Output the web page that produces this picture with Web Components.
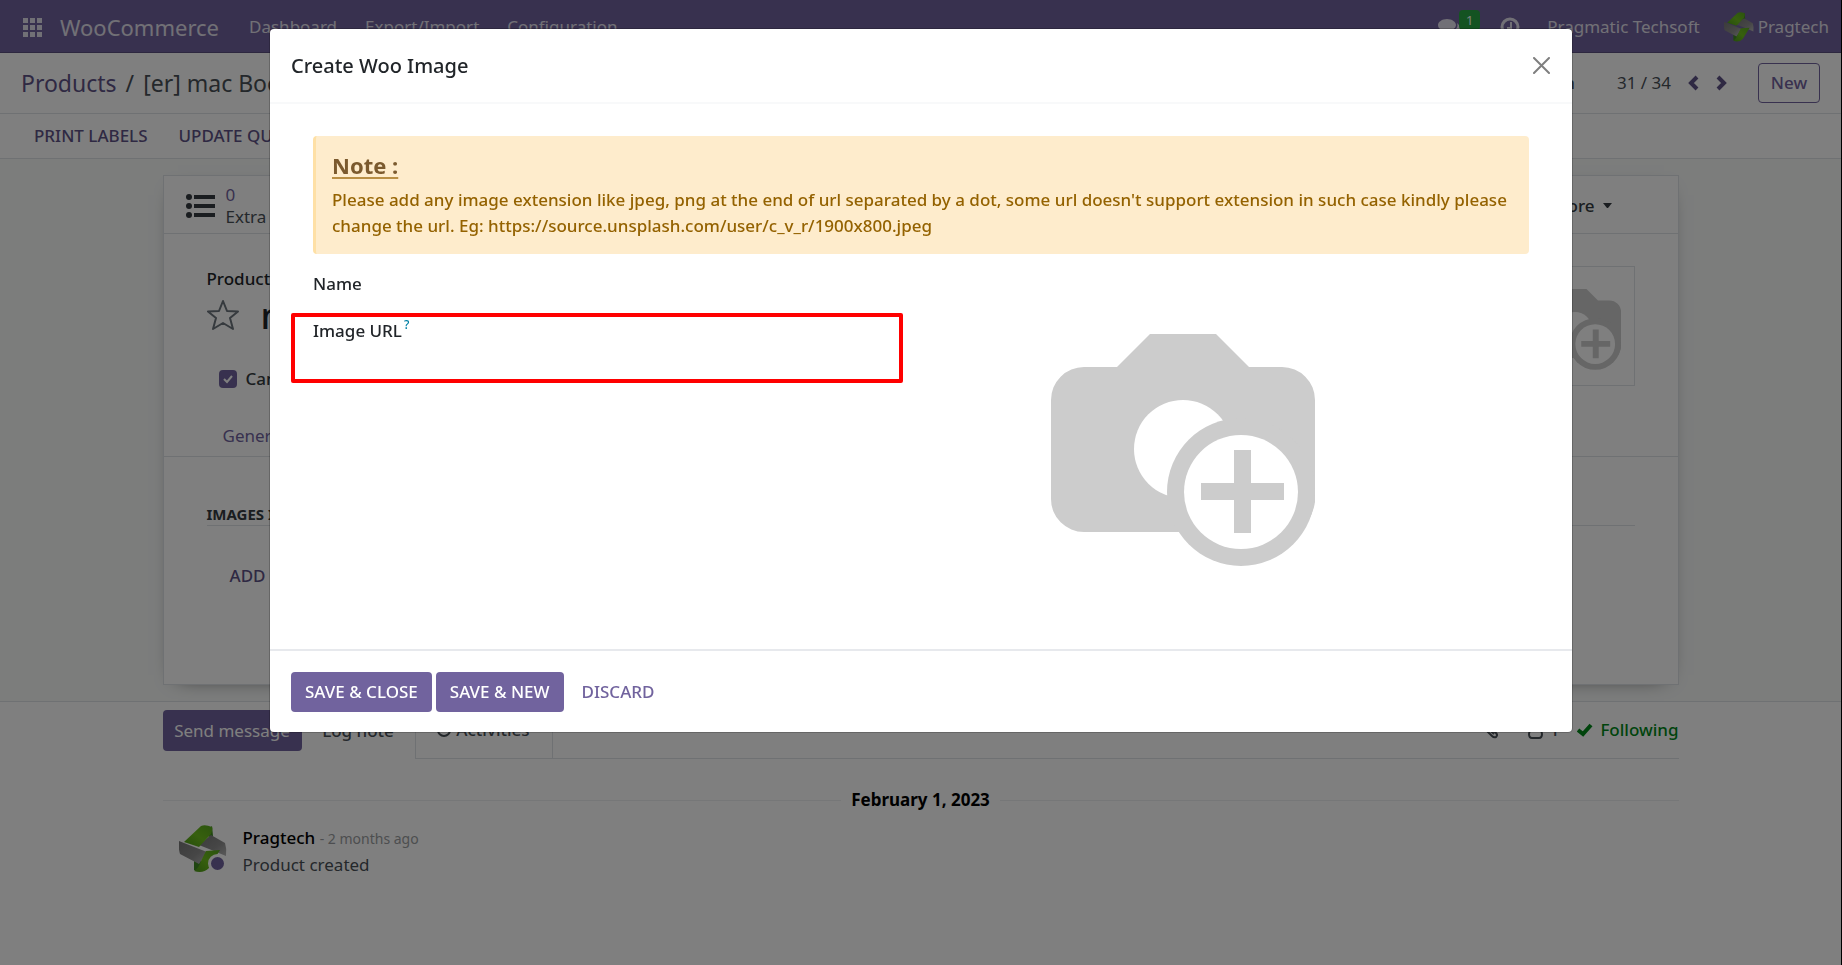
<!DOCTYPE html>
<html lang="en">
<head>
<meta charset="utf-8">
<title>Create Woo Image</title>
<style>
  html, body { height: 100%; }
  body {
    margin: 0; box-sizing: border-box; border-right: 1px solid #000; background: #fff;
    font-family: "Noto Sans", "Open Sans", sans-serif; font-size: 17px; line-height: 26px; color: #495057;
    --brand: #71639e; --ink: #212529; --line: #dee2e6;
  }
</style>
</head>
<body>
<woo-app></woo-app>
<woo-dialog heading="Create Woo Image">
  <woo-alert heading="Note :">Please add any image extension like jpeg, png at the end of url separated by a dot, some url doesn't support extension in such case kindly please change the url. Eg: https://source.unsplash.com/user/c_v_r/1900x800.jpeg</woo-alert>
  <woo-image-form></woo-image-form>
  <woo-button slot="footer" kind="primary">SAVE &amp; CLOSE</woo-button>
  <woo-button slot="footer" kind="primary">SAVE &amp; NEW</woo-button>
  <woo-button slot="footer" kind="link">DISCARD</woo-button>
</woo-dialog>

<script>
function define(name, html, setup) {
  customElements.define(name, class extends HTMLElement {
    constructor() {
      super();
      const root = this.attachShadow({ mode: 'open' });
      const template = document.createElement('template');
      template.innerHTML = '<style>*{box-sizing:border-box}button{font:inherit;color:inherit;background:none;border:0;margin:0;padding:0;cursor:pointer}a{color:inherit;text-decoration:none}svg{display:block;flex:none}</style>' + html;
      root.append(template.content.cloneNode(true));
      if (setup) setup(this, root);
    }
  });
}

/* Camera with a plus badge: the empty state of an image field */
define('camera-placeholder', `
<style>:host{display:block} svg{width:100%;height:auto}</style>
<svg viewBox="0 0 264 232" role="img" aria-label="Add image">
  <path fill="#ccc" d="M33 33H66L99 0H165L198 33H231A33 33 0 0 1 264 66V168Q262 182 250 198H33A33 33 0 0 1 0 165V66A33 33 0 0 1 33 33Z"/>
  <circle cx="132" cy="115" r="49" fill="#fff"/>
  <circle cx="190" cy="158" r="74" fill="#ccc"/>
  <circle cx="190" cy="158" r="57" fill="#fff"/>
  <path fill="#ccc" d="M183 116H200V149H233V166H200V199H183V166H150V149H183Z"/>
</svg>`);

/* Folded ribbon logo used as the user's avatar */
define('user-avatar', `
<style>:host{display:block} svg{width:100%;height:100%}</style>
<svg viewBox="0 0 48 48" aria-hidden="true">
  <defs>
    <linearGradient id="g" x1="1" x2="0" y2="1"><stop stop-color="#58a81e"/><stop offset=".5" stop-color="#6fc01c"/><stop offset="1" stop-color="#4c9a1a"/></linearGradient>
    <linearGradient id="s" x1="0" x2="1" y2="1"><stop stop-color="#777"/><stop offset=".6" stop-color="#8d8d8d"/><stop offset="1" stop-color="#b5b5b5"/></linearGradient>
  </defs>
  <path fill="#3f8a22" d="M27 6L33 1L34 11L30 12Z"/>
  <path fill="url(#s)" d="M32 10L46 18Q48 24 47 31L35 26L20 20Z"/>
  <path fill="#3f8a22" d="M15 36L22 30L22 46L15 45Z"/>
  <path fill="url(#g)" d="M22 1Q26 -1 33 2Q34 4 32 9L20 22L5 17Z"/>
  <path fill="url(#s)" d="M0 16Q10 20 28 27L20 39L1 29Q-1 22 0 16Z"/>
  <path fill="url(#g)" d="M27 26L41 25L30 43Q24 49 15 46Q20 43 22 36Z"/>
</svg>`);

define('woo-button', `
<style>
:host{display:block}
button{height:40px;border-radius:4px;font-weight:500;font-size:17px}
:host([kind=primary]) button{background:var(--brand);color:#fff;padding:0 14px}
:host([kind=link]) button{color:var(--brand);padding:0 14px}
</style><button type="button"><slot></slot></button>`);

define('woo-alert', `
<style>
:host{display:block;background:#feeccc;color:#946200;border-left:3px solid #fee0a6;border-radius:4px;padding:16px 14px 15px 16px;font-weight:500}
h2{margin:0 0 9px;font-size:22px;line-height:26px;font-weight:700;color:#7b5a2e;text-decoration:underline;text-decoration-color:#b98f45;text-decoration-thickness:2px;text-underline-offset:3px}
p{margin:0}
</style><h2></h2><p><slot></slot></p>`, (host, root) => {
  root.querySelector('h2').textContent = host.getAttribute('heading');
});

define('woo-image-form', `
<style>
:host{display:grid;grid-template-columns:1fr 1fr;margin-top:17px}
.row{display:flex;align-items:center;gap:40px}
label{font-weight:500;color:var(--ink)}
sup{font-size:12px;line-height:0;color:#0180a5;font-weight:500;vertical-align:8px;margin-left:2px}
input{border:0;outline:0;background:none;font:inherit;color:inherit;height:26px;padding:0;flex:1;min-width:0;width:100%}
.mark{border:4px solid #f00;border-radius:2px;margin:16px 18px 0 -22px;padding:1px 18px;height:70px}
.picture{width:264px;margin:63px auto 51px 130px}
</style>
<div>
  <div class="row"><label for="name">Name</label><input id="name" type="text"></div>
  <div class="mark"><label for="url">Image URL<sup>?</sup></label><input id="url" type="url"></div>
</div>
<camera-placeholder class="picture"></camera-placeholder>`);

define('woo-dialog', `
<style>
:host{position:fixed;inset:0;background:rgba(0,0,0,.5);display:flex;align-items:flex-start;justify-content:center;padding:29px 16px}
section{background:#fff;width:100%;max-width:1302px;border-radius:4px;box-shadow:0 0 0 1px rgba(0,0,0,.2)}
header{display:flex;align-items:center;justify-content:space-between;height:75px;padding:0 22px 0 21px;border-bottom:2px solid #f8f9fa}
h1{margin:0;font-size:20px;line-height:30px;font-weight:500;color:var(--ink)}
.body{padding:32px 43px}
footer{display:flex;gap:4px;padding:21px 20px 20px 21px;border-top:2px solid #e7e9ed}
</style>
<section role="dialog" aria-modal="true" aria-labelledby="title">
  <header><h1 id="title"></h1>
    <button type="button" aria-label="Close"><svg width="17" height="17" viewBox="0 0 17 17" stroke="#7f7f7f" stroke-width="2" stroke-linecap="round"><path d="M1 1L16 16M16 1L1 16"/></svg></button>
  </header>
  <div class="body"><slot></slot></div>
  <footer><slot name="footer"></slot></footer>
</section>`, (host, root) => {
  root.querySelector('h1').textContent = host.getAttribute('heading');
});

define('woo-navbar', `
<style>
:host{display:flex;align-items:center;height:53px;background:var(--brand);border-bottom:1px solid #5a4f7f;color:#e3e0ec;padding:2px 12px 0 23px}
.brand{font-size:22px;margin:0 30px 0 18px}
nav{display:flex;gap:28px;flex:1}
.chat{display:flex;position:relative;margin-right:40px}
.badge{position:absolute;left:21px;top:-8px;width:21px;height:20px;border-radius:4px;background:#28a745;color:#fff;font-size:13px;line-height:20px;text-align:center}
.company{margin:0 24px 0 27px}
.user{display:flex;align-items:center;gap:4px}
user-avatar{width:30px;height:32px}
</style>
<button type="button" aria-label="Apps"><svg width="19" height="19" viewBox="0 0 19 19" fill="currentColor"><path d="M0 0h5v5H0zM7 0h5v5H7zM14 0h5v5h-5zM0 7h5v5H0zM7 7h5v5H7zM14 7h5v5h-5zM0 14h5v5H0zM7 14h5v5H7zM14 14h5v5h-5z"/></svg></button>
<a class="brand" href="#">WooCommerce</a>
<nav><a href="#">Dashboard</a><a href="#">Export/Import</a><a href="#">Configuration</a></nav>
<button class="chat" type="button" aria-label="Messages"><svg width="22" height="18" viewBox="0 0 22 18" fill="currentColor"><path d="M9 1c5 0 9 3 9 6s-4 6-9 6l-2 0c-2 1-3 2-5 2l2-3C1 11 0 9 0 7c0-3 4-6 9-6z"/><path d="M19 5c4 3 4 7 0 9l2 3c-3 0-4-1-5-2-3 0-5 0-6-1 6 0 11-4 9-9z"/></svg><span class="badge">1</span></button>
<button type="button" aria-label="Activities"><svg width="20" height="20" viewBox="0 0 20 20" fill="none" stroke="currentColor" stroke-width="3"><circle cx="10" cy="10" r="8"/><path stroke-width="2" d="M11 5v6H7"/></svg></button>
<span class="company">Pragmatic Techsoft</span>
<a class="user" href="#"><user-avatar></user-avatar>Pragtech</a>`);

define('control-panel', `
<style>
:host{display:block}
.top{display:flex;align-items:center;height:61px;border-bottom:1px solid var(--line);padding:0 21px;color:#495057}
ol{display:flex;gap:9px;list-style:none;margin:0;padding:0;font-size:23px;flex:1}
ol a{color:#5f5387}
.action{margin-right:42px;font-weight:500}
.prev{margin:0 17px}
.prev,.next{color:#5f5387}
.new{margin-left:31px;width:62px;height:40px;border:1px solid var(--brand);border-radius:4px;color:var(--brand);font-weight:500}
.bar{display:flex;align-items:center;gap:31px;height:45px;border-bottom:1px solid var(--line);padding:0 34px;color:#5f5387;font-weight:500}
</style>
<div class="top">
  <ol><li><a href="#">Products</a></li><li>/</li><li>[er] mac Book</li></ol>
  <button class="action" type="button">Action</button>
  <span>31 / 34</span>
  <button class="prev" type="button" aria-label="Previous"><svg width="11" height="16" viewBox="0 0 11 16" fill="none" stroke="currentColor" stroke-width="4"><path d="M9 2L3 8L9 14"/></svg></button>
  <button class="next" type="button" aria-label="Next"><svg width="11" height="16" viewBox="0 0 11 16" fill="none" stroke="currentColor" stroke-width="4"><path d="M2 2L8 8L2 14"/></svg></button>
  <button class="new" type="button">New</button>
</div>
<div class="bar"><button type="button">PRINT LABELS</button><button type="button">UPDATE QUANTITY</button></div>`);

define('product-sheet', `
<style>
:host{display:block;background:#f8faf9;padding:16px}
.sheet{max-width:1516px;margin:0 auto;background:#fff;border:1px solid var(--line);box-shadow:0 5px 20px -15px #000}
.stats{display:flex;align-items:center;justify-content:space-between;height:58px;border-bottom:1px solid var(--line);padding:2px 66px 0 22px}
.stat{display:flex;align-items:center;gap:11px;text-align:left;line-height:22px}
.stat b{display:block;font-weight:400;color:var(--brand)}
.more{display:flex;align-items:center;gap:8px;font-weight:500;color:#343a40}
.head{display:flex;justify-content:space-between;padding:32px 43px 0}
.name{font-weight:500;color:var(--ink)}
.title{display:flex;align-items:center;gap:22px;height:44px}
h2{margin:0;padding-top:4px;font-size:36px;line-height:44px;font-weight:500;color:var(--ink)}
.check{display:flex;align-items:center;gap:9px;margin:30px 0 0 12px;color:#343a40;font-weight:500}
input{appearance:none;margin:0;width:18px;height:18px;border-radius:4px;background:var(--brand) url("data:image/svg+xml,%3Csvg xmlns='http://www.w3.org/2000/svg' viewBox='0 0 18 18'%3E%3Cpath fill='none' stroke='white' stroke-width='2' d='M5 9l3 3 5-6'/%3E%3C/svg%3E")}
.frame{width:120px;height:120px;border:1px solid var(--line);padding:22px 13px}
.tabs{display:flex;align-items:center;height:65px;padding:24px 59px 0;border-bottom:1px solid var(--line);color:var(--brand)}
.group{padding:47px 43px 95px}
h3{margin:0 0 37px;font-size:15px;line-height:21px;font-weight:700;color:#343a40;border-bottom:1px solid var(--line)}
.add{margin-left:23px;color:#5f5387;font-weight:500}
</style>
<div class="sheet">
  <div class="stats">
    <button class="stat" type="button"><svg width="29" height="24" viewBox="0 0 29 24" fill="#343a40"><circle cx="3" cy="3" r="3"/><circle cx="3" cy="12" r="3"/><circle cx="3" cy="21" r="3"/><path d="M8 1h21v4H8zM8 10h21v4H8zM8 19h21v4H8z"/></svg><span><b>0</b>Extra Prices</span></button>
    <button class="more" type="button">More <svg width="9" height="5" viewBox="0 0 9 5" fill="currentColor"><path d="M0 0H9L5 5H4Z"/></svg></button>
  </div>
  <div class="head">
    <div>
      <div class="name">Product</div>
      <div class="title"><svg width="32" height="31" viewBox="0 0 32 31" fill="none" stroke="#6c757d" stroke-width="2" stroke-linejoin="round"><path d="M16 2L20 12L31 12.500L23 19L26 30L16 24L6 30L9 19L1 12.500L12 12Z"/></svg><h2>mac</h2></div>
      <div class="check"><input id="sold" type="checkbox" checked><label for="sold">Can be Sold</label></div>
    </div>
    <div class="frame"><camera-placeholder></camera-placeholder></div>
  </div>
  <div class="tabs"><a href="#">General Information</a></div>
  <div class="group"><h3>IMAGES INFO</h3><button class="add" type="button">ADD IMAGE</button></div>
</div>`);

define('woo-message', `
<style>
:host{display:flex;gap:16px;margin:12px 16px 0}
.pic{position:relative;width:48px;height:48px}
user-avatar{height:48px}
i{position:absolute;right:0;bottom:0;width:19px;height:19px;border-radius:50%;border:3px solid #fff;background:var(--brand)}
b{font-weight:500;color:#000}
time{font-size:14px;color:#9a9da0}
p{margin:0}
</style>
<div class="pic"><user-avatar></user-avatar><i></i></div>
<div><div><b>Pragtech</b> <time>- 2 months ago</time></div><p><slot></slot></p></div>`);

define('woo-chatter', `
<style>
:host{display:block;background:#fff;border-top:1px solid var(--line);padding:0 16px}
.wrap{max-width:1516px;margin:0 auto}
.bar{display:flex;height:57px;font-weight:500}
.send{width:139px;height:41px;margin-top:8px;border-radius:4px;background:var(--brand);color:#fff;font-weight:400}
.log{width:113px}
.rest{flex:1;display:flex;align-items:center;border-bottom:1px solid var(--line)}
.tab{display:flex;align-items:center;justify-content:center;gap:4px;width:138px;align-self:stretch;border:solid var(--line);border-width:0 1px}
.tools{display:flex;align-items:center;flex:1;justify-content:flex-end}
.users{display:flex;align-items:center;gap:7px;margin:0 18px 0 30px}
.follow{display:flex;align-items:center;gap:7px;color:#008818}
.date{display:flex;align-items:center;gap:10px;margin-top:28px;color:#000;font-weight:700}
.date:before,.date:after{content:"";flex:1;border-top:1px solid #eceef0}
</style>
<div class="wrap">
  <div class="bar">
    <button class="send" type="button">Send message</button>
    <button class="log" type="button">Log note</button>
    <div class="rest">
      <button class="tab" type="button"><svg width="15" height="15" viewBox="0 0 15 15" fill="none" stroke="currentColor" stroke-width="2"><circle cx="7" cy="7" r="6"/><path d="M8 4v4H5"/></svg>Activities</button>
      <div class="tools">
        <button type="button" aria-label="Attachments"><svg width="15" height="18" viewBox="0 0 15 18" fill="none" stroke="currentColor" stroke-width="2"><path d="M5 6L10 12M1 7L9 15Q11 17 13 16Q15 14 13 12L5 3Q3 1 1 3Q0 5 1 7M6 8L11 13"/></svg></button>
        <button class="users" type="button"><svg width="15" height="18" viewBox="0 0 15 18" fill="none" stroke="currentColor" stroke-width="2"><circle cx="7" cy="5" r="4"/><path d="M3 9Q1 10 1 13Q1 17 4 17H11Q14 17 14 13Q14 10 12 9"/></svg>1</button>
        <button class="follow" type="button"><svg width="16" height="14" viewBox="0 0 16 14" fill="none" stroke="currentColor" stroke-width="4"><path d="M1 7L6 11L14 2"/></svg>Following</button>
      </div>
    </div>
  </div>
  <div class="date">February 1, 2023</div>
  <woo-message>Product created</woo-message>
</div>`);

define('woo-app', `
<style>:host{display:block}</style>
<woo-navbar></woo-navbar>
<control-panel></control-panel>
<product-sheet></product-sheet>
<woo-chatter></woo-chatter>`);
</script>
</body>
</html>
